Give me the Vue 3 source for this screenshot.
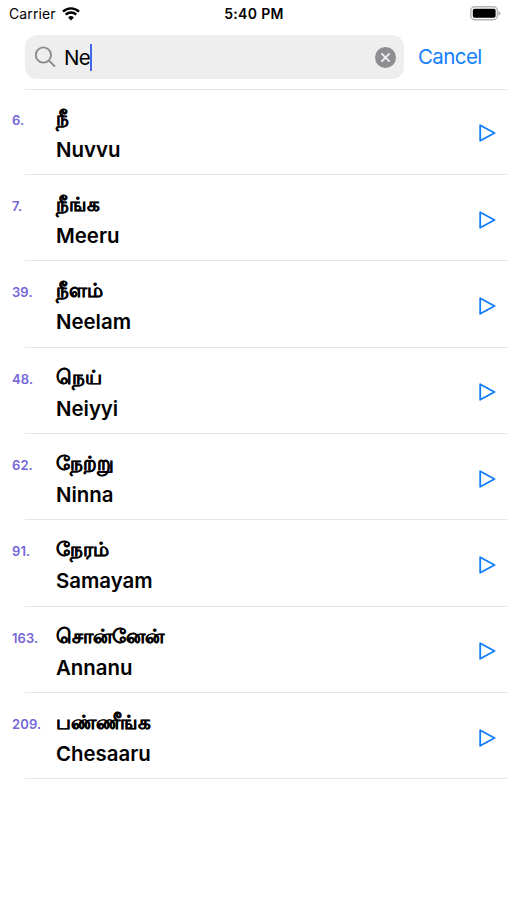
<template>
  <div class="screen">
    <header class="status-bar">
      <div class="carrier">
        <span>Carrier</span>
        <svg class="wifi" width="18" height="14" viewBox="0 0 18 14">
          <path d="M1 4.6 A11.6 11.6 0 0 1 17 4.6" />
          <path d="M3.7 7.6 A7.7 7.7 0 0 1 14.3 7.6" />
          <path class="wifi-dot" d="M9 13.4 L6.1 10.5 A4.1 4.1 0 0 1 11.9 10.5 Z" />
        </svg>
      </div>
      <div class="time">5:40 PM</div>
      <svg class="battery" width="31" height="15" viewBox="0 0 31 15">
        <rect x="0.8" y="0.8" width="26.6" height="13" rx="4" fill="#fff" stroke="#b5b5b5" stroke-width="1.4" />
        <rect x="2.8" y="2.8" width="22.8" height="9" rx="1.8" fill="#000" />
        <path d="M28.5 4.9 Q30.4 5.6 30.4 7.3 Q30.4 9 28.5 9.7 Z" fill="#aaa" />
      </svg>
    </header>

    <div class="search-row">
      <div class="search-field">
        <svg class="search-icon" width="22" height="22" viewBox="0 0 22 22">
          <circle cx="8.4" cy="9" r="7.6" />
          <path d="M14 14.6 L19.4 20" />
        </svg>
        <span class="query">{{ query }}</span>
        <span class="caret"></span>
        <button class="clear-btn" @click="query = ''">
          <svg width="21" height="21" viewBox="0 0 21 21">
            <circle cx="10.5" cy="10.5" r="10.5" fill="#8e8e92" />
            <path d="M6.9 6.9 L14.1 14.1 M14.1 6.9 L6.9 14.1" stroke="#f2f2f2" stroke-width="1.8" stroke-linecap="round" />
          </svg>
        </button>
      </div>
      <button class="cancel-btn">Cancel</button>
    </div>

    <ul class="word-list">
      <li v-for="word in words" :key="word.id" class="word-row">
        <span class="word-number">{{ word.id }}.</span>
        <div class="word-text">
          <span class="tamil">{{ word.tamil }}</span>
          <span class="telugu">{{ word.telugu }}</span>
        </div>
        <button class="play-btn">
          <svg width="18" height="20" viewBox="0 0 18 20">
            <path d="M1.2 2.2 L15.5 10 L1.2 17.8 Z" />
          </svg>
        </button>
      </li>
    </ul>
  </div>
</template>

<script setup>
import { ref } from 'vue';

const query = ref('Ne');

const words = [
  { id: 6, tamil: 'நீ', telugu: 'Nuvvu' },
  { id: 7, tamil: 'நீங்க', telugu: 'Meeru' },
  { id: 39, tamil: 'நீளம்', telugu: 'Neelam' },
  { id: 48, tamil: 'நெய்', telugu: 'Neiyyi' },
  { id: 62, tamil: 'நேற்று', telugu: 'Ninna' },
  { id: 91, tamil: 'நேரம்', telugu: 'Samayam' },
  { id: 163, tamil: 'சொன்னேன்', telugu: 'Annanu' },
  { id: 209, tamil: 'பண்ணீங்க', telugu: 'Chesaaru' }
];
</script>

<style>
body {
  background: #fff;
}
</style>

<style scoped>
.screen {
  width: 507px;
  height: 900px;
  overflow: hidden;
  background: #fff;
  color: #000;
  font-family: Inter, "Liberation Sans", sans-serif;
}

button {
  padding: 0;
  border: none;
  background: none;
  font: inherit;
  cursor: pointer;
}

svg {
  display: block;
}

.status-bar {
  display: grid;
  grid-template-columns: 1fr auto 1fr;
  align-items: center;
  height: 27px;
  padding: 0 6px 0 9px;
  font-size: 14px;
}

.carrier {
  display: flex;
  align-items: center;
  gap: 6px;
  letter-spacing: 0.1px;
}

.wifi {
  fill: none;
  stroke: #000;
  stroke-width: 2.4;
}

.wifi .wifi-dot {
  fill: #000;
  stroke: none;
}

.time {
  margin-right: 2px;
  font-weight: 600;
  letter-spacing: 0.35px;
}

.battery {
  justify-self: end;
}

.search-row {
  display: flex;
  align-items: center;
  height: 44px;
  margin-top: 8px;
  padding-left: 25px;
}

.search-field {
  display: flex;
  align-items: center;
  box-sizing: border-box;
  width: 379px;
  height: 44px;
  padding: 0 8px 0 10px;
  border-radius: 12px;
  background: #eee;
}

.search-icon {
  margin-right: 7px;
  fill: none;
  stroke: #8a8a8e;
  stroke-width: 1.9;
  stroke-linecap: round;
}

.query {
  font-size: 20.5px;
  letter-spacing: -0.6px;
}

.caret {
  width: 2px;
  height: 27px;
  margin-left: -0.5px;
  background: #4268e8;
}

.clear-btn {
  margin-left: auto;
}

.cancel-btn {
  margin: -1px 0 0 14px;
  color: #127efb;
  font-size: 20.5px;
  letter-spacing: -0.6px;
}

.word-list {
  margin: 9.5px 0 0;
  padding: 0;
  list-style: none;
  background: linear-gradient(#e6e6e6, #e6e6e6) 25px 0 / 100% 1px no-repeat;
}

.word-row {
  display: flex;
  box-sizing: border-box;
  height: 86.35px;
  padding: 0 10px 0 12px;
  background: linear-gradient(#e6e6e6, #e6e6e6) 25px 100% / 100% 1px no-repeat;
}

.word-number {
  width: 44px;
  margin-top: 23px;
  color: #7566d8;
  font-size: 13px;
  font-weight: 600;
  line-height: 16px;
  letter-spacing: 0.1px;
}

.word-text {
  display: flex;
  flex: 1;
  flex-direction: column;
  padding-top: 14px;
}

.tamil,
.telugu {
  font-size: 20.4px;
  font-weight: 600;
  white-space: nowrap;
}

.tamil {
  height: 32px;
  font-size: 19.7px;
  line-height: 30px;
  -webkit-text-stroke: 0.15px #000;
}

.telugu {
  height: 30px;
  line-height: 30px;
}

.play-btn {
  align-self: center;
  margin-top: 3px;
}

.play-btn svg {
  fill: none;
  stroke: #127efb;
  stroke-width: 1.8;
  stroke-linejoin: round;
}
</style>
